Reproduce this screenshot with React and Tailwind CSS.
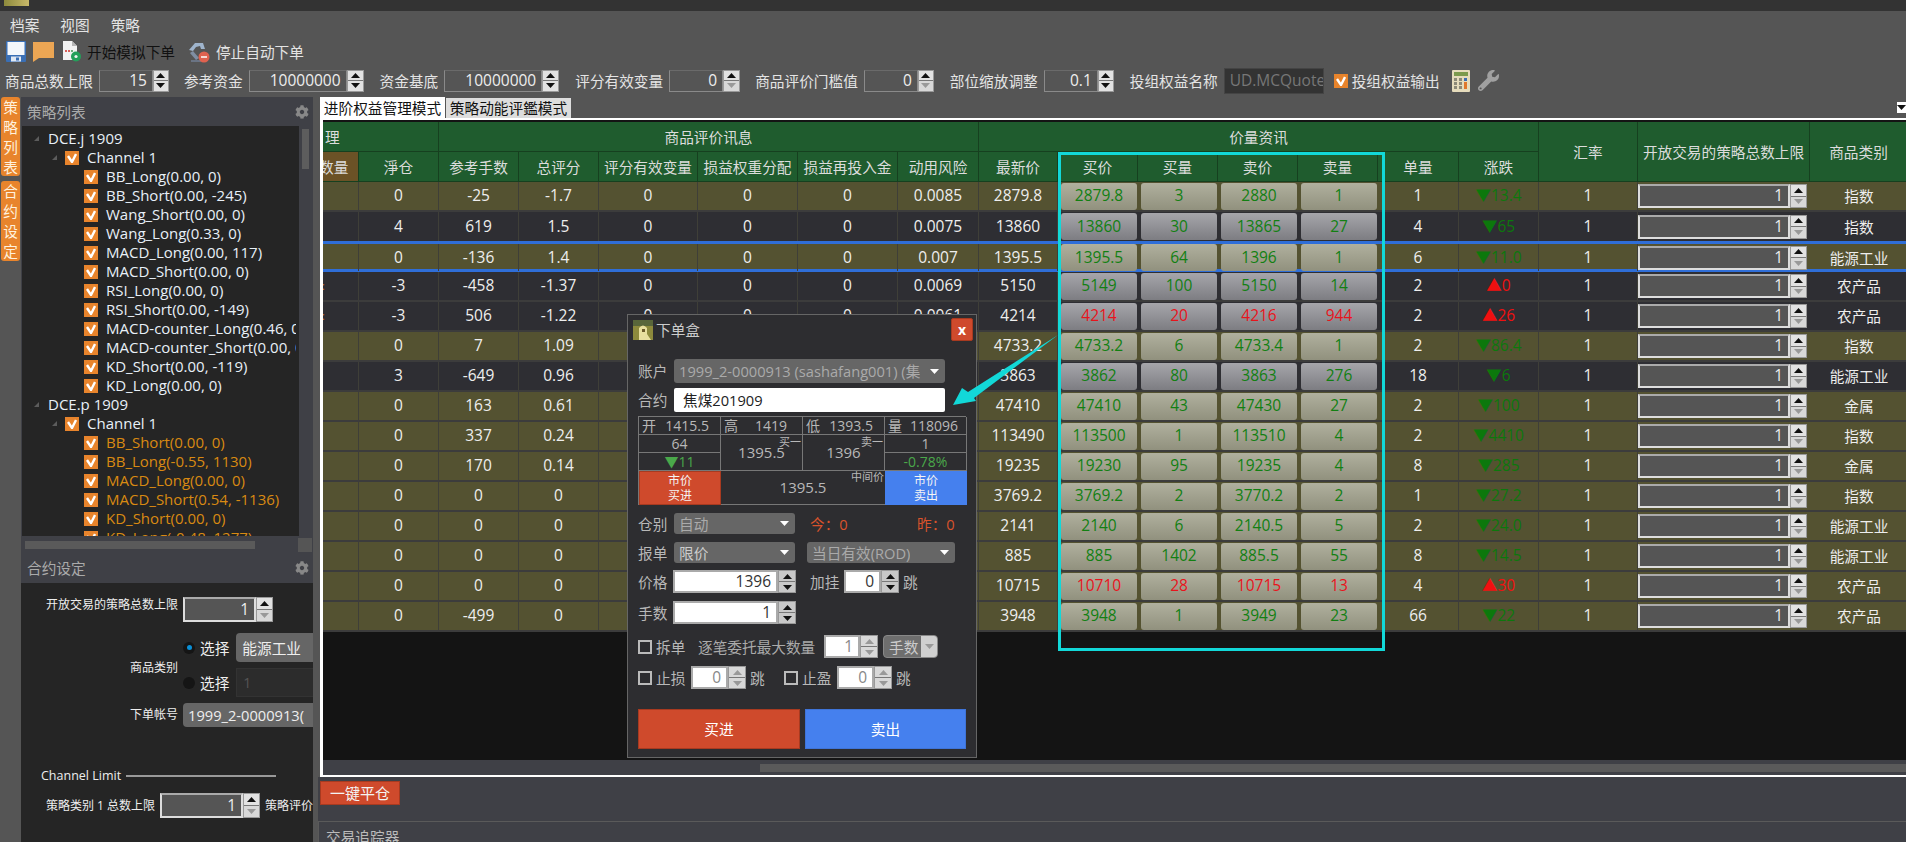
import { FaCog, FaWrench } from "react-icons/fa";

const COLS =
  "grid grid-cols-[36px_80px_80px_80px_99px_100px_100px_81px_79px_80px_80px_80px_80px_81px_80px_99px_172px_98px]";

// 净仓 手数 总评分 ... 每行的资料
const rows = [
  { o: 1, v: ["0", "-25", "-1.7", "0", "0", "0", "0.0085", "2879.8"], p: ["2879.8", "3", "2880", "1"], q: "1", d: "▼13.4", c: "指数" },
  { o: 0, v: ["4", "619", "1.5", "0", "0", "0", "0.0075", "13860"], p: ["13860", "30", "13865", "27"], q: "4", d: "▼65", c: "指数" },
  { o: 1, v: ["0", "-136", "1.4", "0", "0", "0", "0.007", "1395.5"], p: ["1395.5", "64", "1396", "1"], q: "6", d: "▼11.0", c: "能源工业" },
  { o: 0, v: ["-3", "-458", "-1.37", "0", "0", "0", "0.0069", "5150"], p: ["5149", "100", "5150", "14"], q: "2", d: "▲0", c: "农产品", mark: 1 },
  { o: 0, v: ["-3", "506", "-1.22", "0", "0", "0", "0.0061", "4214"], p: ["4214", "20", "4216", "944"], q: "2", d: "▲26", c: "农产品", red: 1, mark: 1 },
  { o: 1, v: ["0", "7", "1.09", "0", "0", "0", "0.0058", "4733.2"], p: ["4733.2", "6", "4733.4", "1"], q: "2", d: "▼86.4", c: "指数" },
  { o: 0, v: ["3", "-649", "0.96", "0", "0", "0", "0.0051", "3863"], p: ["3862", "80", "3863", "276"], q: "18", d: "▼6", c: "能源工业" },
  { o: 1, v: ["0", "163", "0.61", "0", "0", "0", "0", "47410"], p: ["47410", "43", "47430", "27"], q: "2", d: "▼100", c: "金属" },
  { o: 1, v: ["0", "337", "0.24", "0", "0", "0", "0", "113490"], p: ["113500", "1", "113510", "4"], q: "2", d: "▼4410", c: "指数" },
  { o: 1, v: ["0", "170", "0.14", "0", "0", "0", "0", "19235"], p: ["19230", "95", "19235", "4"], q: "8", d: "▼285", c: "金属" },
  { o: 1, v: ["0", "0", "0", "0", "0", "0", "0", "3769.2"], p: ["3769.2", "2", "3770.2", "2"], q: "1", d: "▼27.2", c: "指数" },
  { o: 1, v: ["0", "0", "0", "0", "0", "0", "0", "2141"], p: ["2140", "6", "2140.5", "5"], q: "2", d: "▼24.0", c: "能源工业" },
  { o: 1, v: ["0", "0", "0", "0", "0", "0", "0", "885"], p: ["885", "1402", "885.5", "55"], q: "8", d: "▼14.5", c: "能源工业" },
  { o: 1, v: ["0", "0", "0", "0", "0", "0", "0", "10715"], p: ["10710", "28", "10715", "13"], q: "4", d: "▲30", c: "农产品", red: 1 },
  { o: 1, v: ["0", "-499", "0", "0", "0", "0", "0", "3948"], p: ["3948", "1", "3949", "23"], q: "66", d: "▼22", c: "农产品" },
];

const tree1 = [
  "BB_Long(0.00, 0)",
  "BB_Short(0.00, -245)",
  "Wang_Short(0.00, 0)",
  "Wang_Long(0.33, 0)",
  "MACD_Long(0.00, 117)",
  "MACD_Short(0.00, 0)",
  "RSI_Long(0.00, 0)",
  "RSI_Short(0.00, -149)",
  "MACD-counter_Long(0.46, 0)",
  "MACD-counter_Short(0.00, 0)",
  "KD_Short(0.00, -119)",
  "KD_Long(0.00, 0)",
];
const tree2 = [
  "BB_Short(0.00, 0)",
  "BB_Long(-0.55, 1130)",
  "MACD_Long(0.00, 0)",
  "MACD_Short(0.54, -1136)",
  "KD_Short(0.00, 0)",
  "KD_Long(-0.48, 1277)",
];

function Check({ on = true }) {
  if (!on) return <span className="block w-[14px] h-[14px] shrink-0 border-2 border-[#bbbbbb]" />;
  return (
    <span className="flex items-center justify-center w-[14px] h-[14px] shrink-0 bg-[#e8842c]">
      <svg width="10" height="10" viewBox="0 0 10 10">
        <path d="M1 3 L5 9 L9 1" fill="none" stroke="#fff" strokeWidth="2.4" />
      </svg>
    </span>
  );
}

function SpinBtn({ up, off, gray }) {
  return (
    <span className={`flex items-center justify-center flex-1 ${off ? "bg-[#d8d8d8]" : gray ? "bg-[#c8c8c8]" : "bg-[#e2e2e2]"}`}>
      <svg width="9" height="5" viewBox="0 0 9 5">
        <polygon points={up ? "4.5,0 9,5 0,5" : "0,0 9,0 4.5,5"} fill={off ? "#999" : "#111"} />
      </svg>
    </span>
  );
}

function Spin({ value, w, s = 17, h = 22, kind = "bar", upOff, downOff }) {
  const box = {
    bar: "border border-[#8a8a8a] border-t-[#6a6a6a] text-[#eeeeee] bg-transparent",
    cell: "border-2 border-[#dddddd] border-t-[#aaaaaa] text-[#eeeeee] bg-[#555555]",
    white: "border-2 border-[#aaaaaa] text-[#333333] bg-white",
    off: "border-2 border-[#aaaaaa] text-[#888888] bg-white",
  }[kind];
  return (
    <div className="flex shrink-0 text-[15.5px]" style={{ height: h }}>
      <div className={`flex items-center justify-end pr-[5px] ${box}`} style={{ width: w }}>
        {value}
      </div>
      <div className="flex flex-col gap-[1px] border border-[#999999] bg-[#777777]" style={{ width: s }}>
        <SpinBtn up off={upOff} gray={kind === "white"} />
        <SpinBtn off={downOff} gray={kind === "white"} />
      </div>
    </div>
  );
}

function Caret({ color = "#ffffff" }) {
  return (
    <svg width="9" height="5" viewBox="0 0 9 5" className="shrink-0">
      <polygon points="0,0 9,0 4.5,5" fill={color} />
    </svg>
  );
}

function Expander() {
  return (
    <svg width="5" height="5" viewBox="0 0 5 5" className="shrink-0">
      <polygon points="5,0 5,5 0,5" fill="#5c5c5c" />
    </svg>
  );
}

function Select({ text, w, h = 21, bright }) {
  return (
    <div
      className={`flex items-center justify-between gap-[4px] pl-[5px] pr-[6px] rounded-[3px] bg-[#666666] overflow-hidden shrink-0 ${bright ? "text-[#cccccc]" : "text-[#aaaaaa]"}`}
      style={{ width: w, height: h }}
    >
      <span className="whitespace-nowrap overflow-hidden">{text}</span>
      <Caret />
    </div>
  );
}

function SaveIcon() {
  return (
    <svg width="20" height="21" viewBox="0 0 20 21">
      <rect width="20" height="21" rx="1" fill="#3a6fb5" />
      <rect x="1.5" y="1" width="17" height="13" fill="#f4f7fb" />
      <rect x="5" y="15.5" width="10" height="5" fill="#dfe7f2" />
      <rect x="10" y="16.5" width="3" height="3" fill="#3a6fb5" />
    </svg>
  );
}

function NoteIcon() {
  return (
    <svg width="21" height="20" viewBox="0 0 21 20">
      <path d="M0 0 H21 V16 H6 L0 20 Z" fill="#eca654" />
    </svg>
  );
}

function DocIcon() {
  return (
    <svg width="20" height="21" viewBox="0 0 20 21">
      <path d="M1 0 H10 L15 5 V19 H1 Z" fill="#f2f2f2" />
      <path d="M10 0 V5 H15 Z" fill="#b5b5b5" />
      <rect x="3" y="9" width="2" height="2" fill="#d8605a" />
      <rect x="6" y="9" width="2" height="2" fill="#d8605a" />
      <rect x="9" y="9" width="2" height="2" fill="#6fae7c" />
      <circle cx="14" cy="15.5" r="5" fill="#24a05a" />
      <circle cx="14" cy="15.5" r="1.6" fill="#f2f2f2" />
    </svg>
  );
}

function RobotIcon() {
  return (
    <svg width="22" height="22" viewBox="0 0 22 22">
      <path d="M1 9 L7 2 L15 2 L17 8 L13 8 L12 5 L8 6 L5 10 Z" fill="#9fb4cc" />
      <path d="M5 10 L11 17 L8 19 L2 12 Z" fill="#7f8ea3" />
      <rect x="3" y="19" width="10" height="2" fill="#6a7484" />
      <circle cx="16" cy="16" r="5.5" fill="#e0624f" />
      <rect x="13" y="15" width="6" height="2" fill="#f6d8d2" />
    </svg>
  );
}

function CalcIcon() {
  return (
    <svg width="18" height="22" viewBox="0 0 18 22">
      <rect width="18" height="22" rx="1" fill="#e6dcbc" />
      <rect x="2" y="2" width="14" height="4" fill="#7c9a4e" />
      {[8, 12, 16].map((y) =>
        [2, 7].map((x) => <rect key={`${x}-${y}`} x={x} y={y} width="3" height="3" fill="#8d8a78" />)
      )}
      <rect x="12" y="8" width="3" height="3" fill="#3f6fb0" />
      <rect x="12" y="12" width="3" height="7" fill="#e0782c" />
    </svg>
  );
}

function PicIcon({ w = 20, h = 20 }) {
  return (
    <svg width={w} height={h} viewBox="0 0 20 20" className="shrink-0">
      <rect width="20" height="20" fill="#8d8a3c" />
      <rect width="20" height="6" fill="#59663a" />
      <path d="M6 20 V8 Q10 3 14 8 V14 L18 20 Z" fill="#e8df9e" />
      <rect x="9" y="9" width="3" height="3" fill="#6b5b2a" />
    </svg>
  );
}

function ParamLabel({ children, ml = "" }) {
  return <span className={`shrink-0 text-[#e4e4e4] whitespace-nowrap ${ml}`}>{children}</span>;
}

function VTab({ text, h }) {
  return (
    <div className="flex flex-col items-center justify-center w-[19px] ml-[1px] rounded-[3px] bg-[#e8842c] text-[#fff1dd] leading-[20px]" style={{ height: h }}>
      {text.split("").map((t, i) => (
        <span key={i}>{t}</span>
      ))}
    </div>
  );
}

function TreeRow({ pad, children }) {
  return (
    <div className={`flex items-center h-[19px] whitespace-nowrap ${pad}`}>{children}</div>
  );
}

function TreeGroup({ title, items, orange }) {
  return (
    <>
      <TreeRow pad="pl-[12px] gap-[9px]">
        <Expander />
        <span>{title}</span>
      </TreeRow>
      <TreeRow pad="pl-[30px] gap-[8px]">
        <Expander />
        <Check />
        <span>Channel 1</span>
      </TreeRow>
      {items.map((t) => (
        <TreeRow key={t} pad="pl-[62px] gap-[8px]">
          <Check />
          <span className={orange ? "text-[#d98a12]" : ""}>{t}</span>
        </TreeRow>
      ))}
    </>
  );
}

function PanelHead({ title, className }) {
  return (
    <div className={`flex items-center justify-between pl-[6px] pr-[4px] bg-[#3f4046] text-[#aaaaaa] ${className}`}>
      <span>{title}</span>
      <FaCog className="text-[#888888]" size={14} />
    </div>
  );
}

function LeftPanels() {
  return (
    <div className="w-[292px] shrink-0 flex flex-col bg-[#3f4046] overflow-hidden">
      <PanelHead title="策略列表" className="h-[29px]" />
      <div className="flex h-[410px]">
        <div className="w-[277px] ml-[1px] h-full overflow-hidden bg-[#252525] pt-[3px] pr-[3px] text-[#e8f0f8] text-[15px]">
          <div className="overflow-hidden">
            <TreeGroup title="DCE.j 1909" items={tree1} />
            <TreeGroup title="DCE.p 1909" items={tree2} orange />
          </div>
        </div>
        <div className="pt-[3px] pl-[3px]">
          <div className="w-[7px] h-[40px] bg-[#5d5d5d]" />
        </div>
      </div>
      <div className="flex items-center justify-between h-[17px] pl-[4px] pr-[1px]">
        <div className="w-[230px] h-[8px] bg-[#5a5a5a]" />
        <div className="w-[14px] h-[14px] bg-[#555555]" />
      </div>
      <div className="flex-1 flex flex-col bg-[#252525] text-[12px] text-[#eeeeee] overflow-hidden">
        <PanelHead title="合约设定" className="h-[30px] shrink-0 text-[14.67px]" />
        <div className="flex items-start h-[39px] shrink-0 pt-[15px] pl-[25px] gap-[5px]">
          <span className="w-[132px] text-right leading-[14px] whitespace-nowrap">开放交易的策略总数上限</span>
          <div className="-mt-[1px]">
            <Spin value="1" w={73} s={17} h={25} kind="cell" downOff />
          </div>
        </div>
        <div className="flex h-[64px] shrink-0 mt-[11px] pl-[109px]">
          <span className="self-center pt-[6px] leading-[14px] whitespace-nowrap shrink-0">商品类别</span>
          <div className="flex flex-col gap-[6px] ml-[5px] text-[14.67px] shrink-0">
            <div className="flex items-center h-[29px] gap-[5px]">
              <span className="flex items-center justify-center w-[12px] h-[12px] rounded-full bg-[#151515] shrink-0">
                <span className="w-[5px] h-[5px] rounded-full bg-[#0a8fd6]" />
              </span>
              <span className="whitespace-nowrap shrink-0">选择</span>
              <div className="flex items-center w-[90px] shrink-0 h-[29px] ml-[2px] pl-[6px] rounded-l-[4px] bg-[#666666] whitespace-nowrap">能源工业</div>
            </div>
            <div className="flex items-center h-[29px] gap-[5px]">
              <span className="w-[12px] h-[12px] rounded-full bg-[#151515] shrink-0" />
              <span className="whitespace-nowrap shrink-0">选择</span>
              <div className="flex items-center w-[90px] shrink-0 h-[29px] ml-[2px] pl-[6px] bg-[#2c2c2c] border border-[#333333] text-[#555555] text-[14px]">1</div>
            </div>
          </div>
        </div>
        <div className="flex items-center h-[24px] shrink-0 mt-[6px] pl-[109px] gap-[5px]">
          <span className="whitespace-nowrap shrink-0">下单帐号</span>
          <div className="flex items-center w-[140px] shrink-0 h-[24px] pl-[5px] rounded-l-[4px] bg-[#666666] text-[14.67px] whitespace-nowrap overflow-hidden">1999_2-0000913(</div>
        </div>
        <div className="flex items-center h-[16px] shrink-0 mt-[41px] pl-[20px] gap-[5px] text-[12.5px]">
          <span>Channel Limit</span>
          <span className="w-[150px] h-[2px] bg-[#999999]" />
        </div>
        <div className="flex items-center h-[25px] shrink-0 mt-[9px] pl-[25px] gap-[5px] whitespace-nowrap">
          <span>策略类别 1 总数上限</span>
          <Spin value="1" w={83} s={17} h={25} kind="cell" downOff />
          <span>策略评价</span>
        </div>
      </div>
    </div>
  );
}

function HeadCell({ className = "", children }) {
  return (
    <div className={`flex items-center justify-center border-r border-b border-[#16401f] text-[#dcdcdc] whitespace-nowrap overflow-hidden ${className}`}>
      {children}
    </div>
  );
}

function TableHead() {
  const sub = ["淨仓", "参考手数", "总评分", "评分有效变量", "损益权重分配", "损益再投入金", "动用风险", "最新价", "买价", "买量", "卖价", "卖量", "单量", "涨跌"];
  return (
    <div className={`${COLS} grid-rows-[30px_30px] w-[1585px] bg-[#1f5c2e]`}>
      <HeadCell className="col-span-2 !justify-start pl-[2px]">理</HeadCell>
      <HeadCell className="col-span-6">商品评价讯息</HeadCell>
      <HeadCell className="col-span-7">价量资讯</HeadCell>
      <HeadCell className="row-span-2">汇率</HeadCell>
      <HeadCell className="row-span-2">开放交易的策略总数上限</HeadCell>
      <HeadCell className="row-span-2">商品类别</HeadCell>
      <HeadCell className="!justify-start bg-[#6b5226]">
        <span className="-ml-[4px]">数量</span>
      </HeadCell>
      {sub.map((t) => (
        <HeadCell key={t}>{t}</HeadCell>
      ))}
    </div>
  );
}

function PriceBtn({ text, o, red }) {
  return (
    <div className="pl-[3px] pr-[1px] flex items-center border-0">
      <div
        className={`flex items-center justify-center w-full h-[27px] rounded-[3px] bg-gradient-to-b ${o ? "from-[#b0b09e] to-[#91917e]" : "from-[#a6a6ab] to-[#7d7d82]"} ${red ? "text-[#e8141c]" : "text-[#128012]"}`}
      >
        {text}
      </div>
    </div>
  );
}

function TableRow({ r, i }) {
  const bg = r.o ? "bg-[#545231]" : "bg-[#2e2e33]";
  const frame =
    i === 2
      ? "h-[31px] border-y-[3px] border-[#2f6ed8]"
      : i === 1
        ? "h-[29px]"
        : "h-[30px] border-b-2 border-[#3c3c3c]";
  const up = r.d.startsWith("▲");
  const cell = "flex items-center justify-center border-r border-[#3f3f38]";
  return (
    <div className={`${COLS} ${bg} ${frame} w-[1585px] text-[#eeeeee] text-[15.5px]`}>
      <div className="border-r border-[#3f3f38] flex items-center">
        {r.mark ? <span className="text-[#e8842c] text-[10px] -ml-[1px]">:</span> : null}
      </div>
      {r.v.map((t, k) => (
        <div key={k} className={cell}>
          {t}
        </div>
      ))}
      {r.p.map((t, k) => (
        <PriceBtn key={k} text={t} o={r.o} red={r.red} />
      ))}
      <div className={cell}>{r.q}</div>
      <div className={`${cell} ${up ? "text-[#f01010]" : "text-[#0c780c]"}`}>{r.d}</div>
      <div className={cell}>1</div>
      <div className="flex items-center">
        <Spin value="1" w={152} s={17} h={24} kind="cell" downOff />
      </div>
      <div className="flex items-center justify-center text-[14.67px]">{r.c}</div>
    </div>
  );
}

function QCell({ children, className = "" }) {
  return <div className={`flex items-center justify-center border-r border-b border-[#777777] ${className}`}>{children}</div>;
}

function QuoteGrid() {
  return (
    <div className="grid grid-cols-[82px_82px_82px_82px] grid-rows-[18px_18px_18px_34px] w-[328px] mt-[4px] border-t border-l border-[#777777] text-[14px]">
      <QCell className="!justify-between px-[3px]"><span>开</span><span className="pr-[8px]">1415.5</span></QCell>
      <QCell className="!justify-between px-[3px]"><span>高</span><span className="pr-[12px]">1419</span></QCell>
      <QCell className="!justify-between px-[3px]"><span>低</span><span className="pr-[8px]">1393.5</span></QCell>
      <QCell className="!justify-between px-[3px]"><span>量</span><span className="pr-[5px]">118096</span></QCell>
      <QCell>64</QCell>
      <QCell className="relative row-span-2">
        <span className="absolute right-[1px] top-[1px] text-[11px] leading-[12px]">买一</span>
        <span className="text-[15px]">1395.5</span>
      </QCell>
      <QCell className="relative row-span-2">
        <span className="absolute right-[1px] top-[1px] text-[11px] leading-[12px]">卖一</span>
        <span className="text-[15px]">1396</span>
      </QCell>
      <QCell>1</QCell>
      <QCell className="text-[#4aa84a]">▼11</QCell>
      <QCell className="text-[#4aa84a]">-0.78%</QCell>
      <div className="flex flex-col items-center justify-center bg-[#cf4a2c] border border-[#a83a20] text-[#f4f4f4] text-[12px] leading-[15px]">
        <span>市价</span>
        <span>买进</span>
      </div>
      <div className="relative col-span-2 flex items-center justify-center border-b border-[#777777]">
        <span className="absolute right-[1px] top-[0px] text-[11px] leading-[12px]">中间价</span>
        <span className="text-[15px]">1395.5</span>
      </div>
      <div className="flex flex-col items-center justify-center bg-[#4580ee] text-[#f4f4f4] text-[12px] leading-[15px]">
        <span>市价</span>
        <span>卖出</span>
      </div>
    </div>
  );
}

function OrderBox() {
  return (
    <div className="absolute left-[627px] top-[314px] w-[350px] h-[444px] border border-[#666666] bg-[#2d2d30] text-[#b8b8b8] text-[14.67px] px-[10px]">
      <div className="flex items-center justify-between h-[23px] mt-[3px] mb-[18px] -ml-[5px] -mr-[7px]">
        <div className="flex items-center gap-[3px] text-[#cccccc]">
          <PicIcon />
          <span>下单盒</span>
        </div>
        <div className="flex items-center justify-center w-[22px] h-[23px] rounded-[2px] bg-[#cf4a2c] border border-[#a83a20] text-white text-[14px] font-bold">x</div>
      </div>

      <div className="flex items-center h-[24px]">
        <span className="w-[36px] shrink-0">账户</span>
        <Select text="1999_2-0000913 (sashafang001) (集" w={271} h={24} />
      </div>
      <div className="flex items-center h-[24px] mt-[5px]">
        <span className="w-[36px] shrink-0">合约</span>
        <div className="flex items-center w-[271px] h-[24px] pl-[9px] rounded-[2px] bg-white text-[#222222]">焦煤201909</div>
      </div>

      <QuoteGrid />

      <div className="flex items-center h-[21px] mt-[8px]">
        <span className="w-[36px] shrink-0">仓别</span>
        <Select text="自动" w={121} />
        <span className="ml-[15px] w-[107px] text-[#d8532c]">今：0</span>
        <span className="text-[#d8532c]">昨：0</span>
      </div>
      <div className="flex items-center h-[21px] mt-[8px]">
        <span className="w-[36px] shrink-0">报单</span>
        <Select text="限价" w={121} bright />
        <div className="ml-[12px]">
          <Select text="当日有效(ROD)" w={148} />
        </div>
      </div>
      <div className="flex items-center h-[23px] mt-[7px]">
        <span className="w-[35px] shrink-0">价格</span>
        <Spin value="1396" w={105} s={18} h={23} kind="white" />
        <span className="ml-[14px] w-[34px] shrink-0">加挂</span>
        <Spin value="0" w={37} s={18} h={23} kind="white" />
        <span className="ml-[4px]">跳</span>
      </div>
      <div className="flex items-center h-[23px] mt-[8px]">
        <span className="w-[35px] shrink-0">手数</span>
        <Spin value="1" w={105} s={18} h={23} kind="white" />
      </div>
      <div className="flex items-center h-[23px] mt-[11px]">
        <Check on={false} />
        <span className="ml-[4px] w-[42px] shrink-0">拆单</span>
        <span className="w-[126px] shrink-0 whitespace-nowrap text-[#aaaaaa]">逐笔委托最大数量</span>
        <Spin value="1" w={36} s={18} h={23} kind="off" upOff downOff />
        <div className="flex items-center justify-between w-[55px] h-[23px] ml-[5px] pl-[5px] rounded-[4px] border border-[#888888] bg-[#6e6e6e] text-[#cccccc] overflow-hidden">
          <span className="whitespace-nowrap">手数</span>
          <span className="flex items-center justify-center w-[16px] h-full bg-[#d0d0d0]">
            <Caret color="#999999" />
          </span>
        </div>
      </div>
      <div className="flex items-center h-[23px] mt-[8px]">
        <Check on={false} />
        <span className="ml-[4px] w-[35px] shrink-0">止损</span>
        <Spin value="0" w={37} s={18} h={23} kind="off" upOff downOff />
        <span className="ml-[4px] w-[34px] shrink-0">跳</span>
        <Check on={false} />
        <span className="ml-[4px] w-[35px] shrink-0">止盈</span>
        <Spin value="0" w={37} s={18} h={23} kind="off" upOff downOff />
        <span className="ml-[4px]">跳</span>
      </div>
      <div className="flex justify-between mt-[20px] text-white">
        <div className="flex items-center justify-center w-[162px] h-[40px] bg-[#cf4a2c] border border-[#a83a20]">买进</div>
        <div className="flex items-center justify-center w-[161px] h-[40px] bg-[#4580ee] border border-[#3f74d8]">卖出</div>
      </div>
    </div>
  );
}

export default function App() {
  return (
    <div className="relative w-[1906px] h-[842px] overflow-hidden flex flex-col bg-[#555555] text-[14.67px] font-['Open_Sans','Noto_Sans_CJK_SC',sans-serif]">
      {/* 标题列 */}
      <div className="h-[11px] shrink-0 bg-[#333333] overflow-hidden pl-[4px]">
        <div className="w-[25px] h-[6px] bg-gradient-to-r from-[#8d8a3c] to-[#c9b96a]" />
      </div>

      {/* 选单 */}
      <div className="flex items-center h-[27px] shrink-0 pl-[10px] gap-[21px] text-[#e4e4e4]">
        <span>档案</span>
        <span>视图</span>
        <span>策略</span>
      </div>

      {/* 工具列 */}
      <div className="flex items-center h-[27px] shrink-0 pl-[6px]">
        <SaveIcon />
        <div className="ml-[7px]"><NoteIcon /></div>
        <div className="ml-[8px]"><DocIcon /></div>
        <span className="ml-[5px] text-[#111111]">开始模拟下单</span>
        <div className="ml-[13px]"><RobotIcon /></div>
        <span className="ml-[6px] text-[#e4e4e4]">停止自动下单</span>
      </div>

      {/* 参数列 */}
      <div className="flex items-center h-[32px] shrink-0 pl-[5px] pb-[1px] gap-[6px]">
        <ParamLabel>商品总数上限</ParamLabel>
        <Spin value="15" w={54} s={16} />
        <ParamLabel ml="ml-[9px]">参考资金</ParamLabel>
        <Spin value="10000000" w={98} s={17} />
        <ParamLabel ml="ml-[10px]">资金基底</ParamLabel>
        <Spin value="10000000" w={98} s={17} />
        <ParamLabel ml="ml-[10px]">评分有效变量</ParamLabel>
        <Spin value="0" w={54} s={17} downOff />
        <ParamLabel ml="ml-[9px]">商品评价门槛值</ParamLabel>
        <Spin value="0" w={54} s={16} downOff />
        <ParamLabel ml="ml-[10px]">部位缩放调整</ParamLabel>
        <Spin value="0.1" w={54} s={16} />
        <ParamLabel ml="ml-[10px]">投组权益名称</ParamLabel>
        <div className="flex items-center w-[100px] h-[26px] pl-[5px] bg-[#333333] border border-[#444444] text-[#777777] text-[15.5px] overflow-hidden whitespace-nowrap">UD.MCQuote</div>
        <div className="ml-[4px]"><Check /></div>
        <ParamLabel ml="-ml-[2px]">投组权益输出</ParamLabel>
        <div className="ml-[6px]"><CalcIcon /></div>
        <FaWrench className="ml-[2px] text-[#a0a0a0]" size={21} />
      </div>

      <div className="flex flex-1 min-h-0">
        {/* 左侧直立页签 */}
        <div className="w-[21px] shrink-0 flex flex-col gap-[5px] bg-[#555555]">
          <VTab text="策略列表" h={79} />
          <VTab text="合约设定" h={80} />
        </div>

        <LeftPanels />

        <div className="w-[7px] shrink-0" />

        <div className="flex-1 min-w-0 flex flex-col">
          {/* 页签 */}
          <div className="flex items-end justify-between h-[21px] shrink-0">
            <div className="flex items-end gap-[1px]">
              <div className="flex items-center justify-center w-[125px] h-[21px] bg-white text-[#111111] whitespace-nowrap">进阶权益管理模式</div>
              <div className="flex items-center justify-center w-[125px] h-[20px] bg-[#dddddd] text-[#111111] whitespace-nowrap">策略动能评鑑模式</div>
            </div>
            <div className="flex items-center justify-center w-[9px] h-[11px] mb-[5px] bg-white">
              <Caret color="#111111" />
            </div>
          </div>

          {/* 表格窗格 */}
          <div className="flex flex-col h-[659px] shrink-0 border-t-2 border-b-2 border-l-[3px] border-white bg-[#141414] overflow-hidden">
            <div className="flex-1 min-h-0 pt-[2px] overflow-hidden">
              <TableHead />
              {rows.map((r, i) => (
                <TableRow key={i} r={r} i={i} />
              ))}
            </div>
            <div className="flex items-center h-[15px] shrink-0 pl-[437px] bg-[#3f4046]">
              <div className="w-full h-[8px] bg-[#5a5a5a]" />
            </div>
          </div>

          <div className="flex-1 -ml-[2px] pl-[2px] bg-[#3f4046] flex flex-col">
            <div className="h-[44px] shrink-0 pt-[4px]">
              <div className="flex items-center justify-center w-[80px] h-[24px] bg-[#cf4a2c] border border-[#a83a20] text-[#f4f4f4] text-[15px]">一键平仓</div>
            </div>
            <div className="flex-1 -ml-[2px] pl-[7px] pt-[4px] border-t border-l border-[#5a5a5a] text-[#bbbbbb] overflow-hidden">交易追踪器</div>
          </div>
        </div>
      </div>

      <OrderBox />

      {/* 标注框与箭头 */}
      <div className="absolute left-[1058px] top-[152px] w-[327px] h-[499px] border-[3px] border-[#12d8d8]" />
      <svg className="absolute left-[945px] top-[330px]" width="120" height="80" viewBox="0 0 120 80">
        <polygon points="8,75 17,58 23,62 113,5 29,68 31,71" fill="#12d8d8" />
      </svg>
    </div>
  );
}
